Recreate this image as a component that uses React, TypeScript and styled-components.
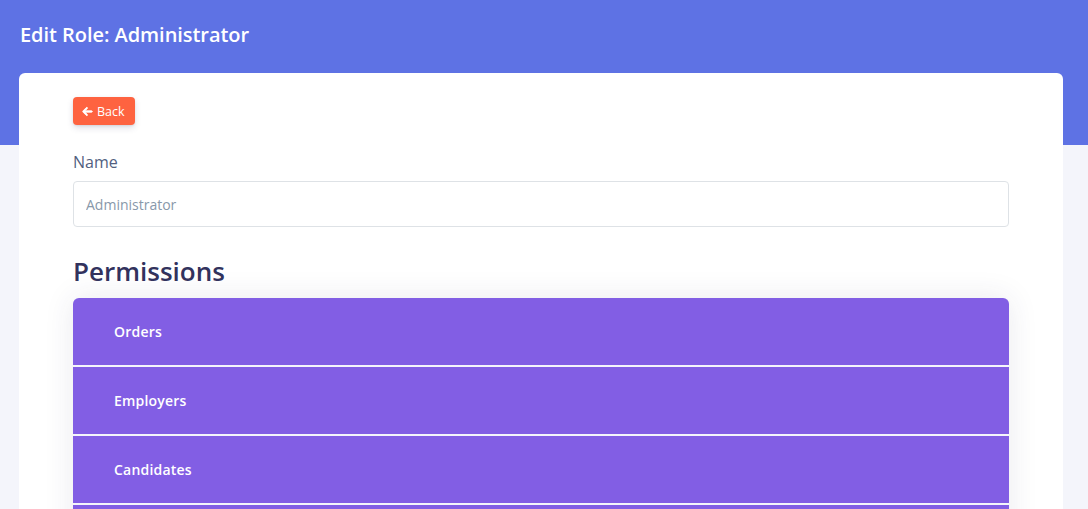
import React from "react";
import styled, { createGlobalStyle } from "styled-components";

const GlobalStyle = createGlobalStyle`
  html, body { margin: 0; padding: 0; }
  body {
    background: #f4f5fb;
    font-family: "Open Sans", "Liberation Sans", sans-serif;
    overflow: hidden;
  }
  * { box-sizing: border-box; }
`;

const Header = styled.header`
  background: #5e72e4;
  height: 145px;
  padding: 21px 20px 0;
`;

const Title = styled.h1`
  margin: 0;
  color: #fff;
  font-size: 20px;
  font-weight: 600;
  line-height: 27px;
  letter-spacing: -0.05px;
`;

const Card = styled.main`
  position: relative;
  margin: -72px 25px 0 19px;
  background: #fff;
  border-radius: 6px;
  padding: 24px 54px 40px;
  min-height: 600px;
`;

const BackButton = styled.button`
  display: inline-flex;
  align-items: center;
  gap: 4px;
  height: 28px;
  padding: 0 10px 0 9px;
  border: none;
  border-radius: 4px;
  background: #fe6340;
  color: #fff;
  font-family: inherit;
  font-size: 12.5px;
  font-weight: 500;
  box-shadow: 0 3px 6px rgba(50, 50, 93, 0.15), 0 1px 2px rgba(0, 0, 0, 0.08);
`;

const Field = styled.div`
  margin-top: 25px;
`;

const Label = styled.label`
  display: block;
  color: #525f7f;
  font-size: 16px;
  line-height: 24px;
  margin-bottom: 7px;
`;

const Input = styled.input`
  display: block;
  width: 100%;
  height: 46px;
  border: 1px solid #dee2e6;
  border-radius: 4px;
  padding: 0 12px;
  font-family: inherit;
  font-size: 14px;
  color: #8898aa;
  outline: none;
  &::placeholder { color: #8898aa; }
`;

const SectionTitle = styled.h2`
  margin: 26px 0 0;
  color: #32325d;
  font-size: 26px;
  font-weight: 600;
  line-height: 36px;
`;

const Accordion = styled.div`
  margin-top: 9px;
  border-radius: 6px;
  overflow: hidden;
  box-shadow: 0 0 30px rgba(50, 50, 93, 0.1);
  display: flex;
  flex-direction: column;
  gap: 2px;
  background: #f4f5fb;
`;

const Item = styled.div`
  background: #825ee4;
  height: 67px;
  display: flex;
  align-items: center;
  padding-left: 41px;
  color: #fff;
  font-size: 14px;
  font-weight: 600;
  letter-spacing: 0.2px;
`;

const ArrowLeft = () => (
  <svg width="11" height="11" viewBox="0 0 448 512" fill="currentColor" stroke="currentColor" strokeWidth="40">
    <path d="M9.4 233.4c-12.5 12.5-12.5 32.8 0 45.3l160 160c12.5 12.5 32.8 12.5 45.3 0s12.5-32.8 0-45.3L109.2 288H416c17.7 0 32-14.3 32-32s-14.3-32-32-32H109.3L214.6 118.6c12.5-12.5 12.5-32.8 0-45.3s-32.8-12.5-45.3 0l-160 160z" />
  </svg>
);

const sections = ["Orders", "Employers", "Candidates", "Roles"];

export default function App() {
  return (
    <>
      <GlobalStyle />
      <Header>
        <Title>Edit Role: Administrator</Title>
      </Header>
      <Card>
        <BackButton>
          <ArrowLeft />
          Back
        </BackButton>
        <Field>
          <Label>Name</Label>
          <Input placeholder="Administrator" />
        </Field>
        <SectionTitle>Permissions</SectionTitle>
        <Accordion>
          {sections.map((s) => (
            <Item key={s}>{s}</Item>
          ))}
        </Accordion>
      </Card>
    </>
  );
}
